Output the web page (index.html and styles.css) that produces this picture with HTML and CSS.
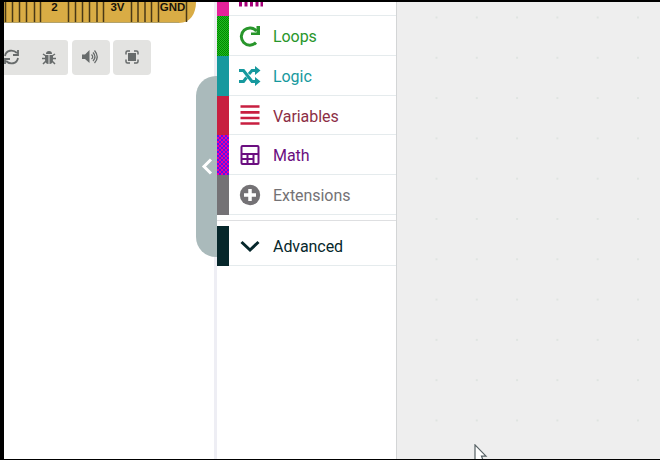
FILE: index.html
```
<!DOCTYPE html>
<html lang="en">
<head>
<meta charset="utf-8">
<title>Editor</title>
<link rel="stylesheet" href="styles.css">
</head>
<body>
<main class="app">
  <section class="simulator">
    <svg class="board" width="192" height="21" viewBox="4 2 192 21">
      <path d="M4 2H196C196 14 190 23 179 23H4Z" fill="#d9ac45"/>
      <path d="M4 22.5H179" stroke="#b2a26c" fill="none"/>
      <path d="M5.500 2V22M12.500 2V22M19.500 2V22M26.500 2V22M34.500 2V22M40.500 2V22M68.500 2V22M75.500 2V22M82.500 2V22M89.500 2V22M97 2V22M103.500 2V22M131.500 2V22M138 2V22M145 2V22M151.500 2V22M158.500 2V22M186.500 2V22" stroke="#493817" stroke-width="1.500"/>
      <text x="54.500" y="11">2</text><text x="117.500" y="11">3V</text><text x="172.500" y="11">GND</text>
    </svg>
    <div class="tools">
      <div class="tool pair">
        <svg width="15" height="18" viewBox="1 0 15 18"><path d="M2 8C3 2 10 1 14 5M15 2V7H10M15 10C14 16 7 17 3 13M2 16V11H7" fill="none" stroke="#676b6b" stroke-width="1.800"/></svg>
        <svg width="14" height="15" viewBox="0 0 14 15"><path d="M4 4a3 3 0 0 1 6 0ZM3 5H6.500V14C4 14 3 12 3 9ZM7.500 5H11V9C11 12 10 14 7.500 14Z" fill="#676b6b"/><path d="M1 4L4 6M13 4L10 6M0 8.500H3M11 8.500H14M1 14L4 11M13 14L10 11" stroke="#676b6b" stroke-width="1.500"/></svg>
      </div>
      <div class="tool"><svg width="17" height="14" viewBox="0 0 17 14"><path d="M0 4.500H3L7.500 0V13L3 9H0Z" fill="#676b6b"/><path d="M9.500 4.500Q12 7 9.500 9M11 2.500Q15 7 11 11M12.500 .5Q18 7 12.500 13" stroke="#676b6b" stroke-width="1.300" fill="none"/></svg></div>
      <div class="tool"><svg width="14" height="14" viewBox="0 0 14 14"><path d="M3 3H11V11H3Z" fill="#676b6b"/><path d="M1 4.500V2.500Q1 1 2.500 1H5M9 1H11.500Q13 1 13 2.500V4.500M13 9.500V11.500Q13 13 11.500 13H9M5 13H2.500Q1 13 1 11.500V9.500" stroke="#676b6b" stroke-width="1.500" fill="none"/></svg></div>
    </div>
    <div class="collapse"><svg width="12" height="17" viewBox="0 0 12 17"><path d="M10 1.500L3 8.500L10 15.500" fill="none" stroke="#fff" stroke-width="3"/></svg></div>
  </section>
  <nav class="toolbox">
    <div class="row clipped"><i class="strip pink"></i><svg class="icon" width="24" height="5" viewBox="0 0 24 5"><path d="M1.500 0V4.500M7 0V4.500M12.500 0V4.500M18 0V4.500M23 0V4.500" stroke="#a50078" stroke-width="3"/></svg></div>
    <div class="row loops"><i class="strip"></i><svg class="icon" viewBox="0 0 22 22"><path d="M17 17.600A8.600 8.600 0 1 1 17.500 6" fill="none" stroke="currentColor" stroke-width="3"/><path d="M21 1V10H12V7.500H17.500V1Z" fill="currentColor"/></svg><span>Loops</span></div>
    <div class="row logic"><i class="strip"></i><svg class="icon" viewBox="0 0 22 22"><path d="M0 5.500H4.500L13 16.500H17M0 16.500H4.500L7.500 12.500M10 9L13 5.500H17" fill="none" stroke="currentColor" stroke-width="3"/><path d="M16 1L21.500 5.500L16 10ZM16 12L21.500 16.500L16 21Z" fill="currentColor"/></svg><span>Logic</span></div>
    <div class="row variables"><i class="strip"></i><svg class="icon" viewBox="0 0 22 22"><path d="M1.500 2.500H20.500M1.500 8.300H20.500M1.500 14H20.500M1.500 19.500H20.500" stroke="currentColor" stroke-width="2.700"/></svg><span>Variables</span></div>
    <div class="row math"><i class="strip"></i><svg class="icon" viewBox="0 0 22 22"><rect x="2.500" y="2" width="17" height="18" rx="1" fill="none" stroke="currentColor" stroke-width="2"/><path d="M2.500 10H19.500M2.500 15H14.500M8.500 10V20M14.500 10V20" fill="none" stroke="currentColor" stroke-width="2"/></svg><span>Math</span></div>
    <div class="row extensions"><i class="strip"></i><svg class="icon" viewBox="0 0 22 22"><circle cx="11" cy="11" r="10.200" fill="currentColor"/><path d="M11 5V17M5 11H17" stroke="#fff" stroke-width="3.500"/></svg><span>Extensions</span></div>
    <div class="divider"></div>
    <div class="row advanced"><i class="strip"></i><svg class="icon" viewBox="0 0 22 22"><path d="M2.500 7L11 15L19.500 7" fill="none" stroke="currentColor" stroke-width="3"/></svg><span>Advanced</span></div>
  </nav>
  <section class="workspace">
    <svg class="cursor" width="14" height="15" viewBox="0 0 14 15"><path d="M1 0.800L12 12.200H7.500L9 16H1Z" fill="#fff" stroke="#566164" stroke-width="1.200"/></svg>
  </section>
</main>
</body>
</html>
```
FILE: styles.css
```
* { box-sizing: border-box; }
body { margin: 0; background: #000; font-family: Roboto, sans-serif; }
.app { width: 660px; height: 460px; padding: 2px 0 1px 4px; display: grid; grid-template-columns: 213px 179px 264px; overflow: hidden; background: #000; }
.simulator { position: relative; background: #fff; border-right: 3px solid #eeeef4; }
.board { display: block; }
.board text { font: bold 11.500px "Liberation Sans", sans-serif; text-anchor: middle; fill: #17130b; }
.tools { display: flex; gap: 3.500px; margin-top: 17px; }
.tool { width: 38px; height: 34.500px; background: #e3e3e1; border-radius: 4px; display: flex; align-items: center; justify-content: center; }
.tool.pair { width: 64px; border-radius: 0 3px 3px 0; justify-content: flex-start; gap: 23px; }
.collapse { position: absolute; left: 191.500px; top: 74px; width: 21.500px; height: 181px; background: #aababb; border-radius: 20px 0 0 20px; display: flex; align-items: center; padding-left: 5px; }
.toolbox { background: #fff; overflow: hidden; }
.row { height: 39.800px; display: flex; align-items: center; font-size: 16px; letter-spacing: -.06px; background: linear-gradient(#e5ebed, #e5ebed) 12px 100% / 100% 1px no-repeat; }
.row span { padding-top: 2px; }
.row.math span, .row.extensions span { padding-top: 0; }
.clipped { height: 14px; align-items: flex-start; }
.strip { width: 12px; height: 100%; background: currentColor; margin-right: 9.500px; flex: none; }
.icon { width: 22px; height: 22px; margin-right: 12.500px; flex: none; }
.clipped .icon { width: 24px; height: 5px; }
.pink { color: #e6219a; }
.loops { color: #28962b; }
.loops .strip { background: repeating-conic-gradient(#008700 0 25%, #20bd20 0 50%) 0 0 / 2px 2px; }
.logic { color: #16999e; }
.variables { color: #8c2e45; }
.variables .icon, .variables .strip { color: #c81f40; }
.math { color: #6b0e80; }
.math .strip { background: repeating-conic-gradient(#f0009c 0 25%, #5a10f0 0 50%) 0 0 / 4px 4px; }
.extensions { color: #747275; }
.divider { height: 11px; background: linear-gradient(#dedfe1, #dedfe1) 0 5px / 100% 1px no-repeat; }
.advanced { color: #06272b; }
.workspace { position: relative; border-left: 1px solid #d3d5d6; background: linear-gradient(#eee, #eee) 0 0 / 38px 100% no-repeat, radial-gradient(circle at 1px 1px, #dfe4e1 0 .8px, transparent 1.100px) 38.500px 14.500px / 40.300px 40.300px #eee; }
.cursor { position: absolute; left: 77px; bottom: 0; }
```
